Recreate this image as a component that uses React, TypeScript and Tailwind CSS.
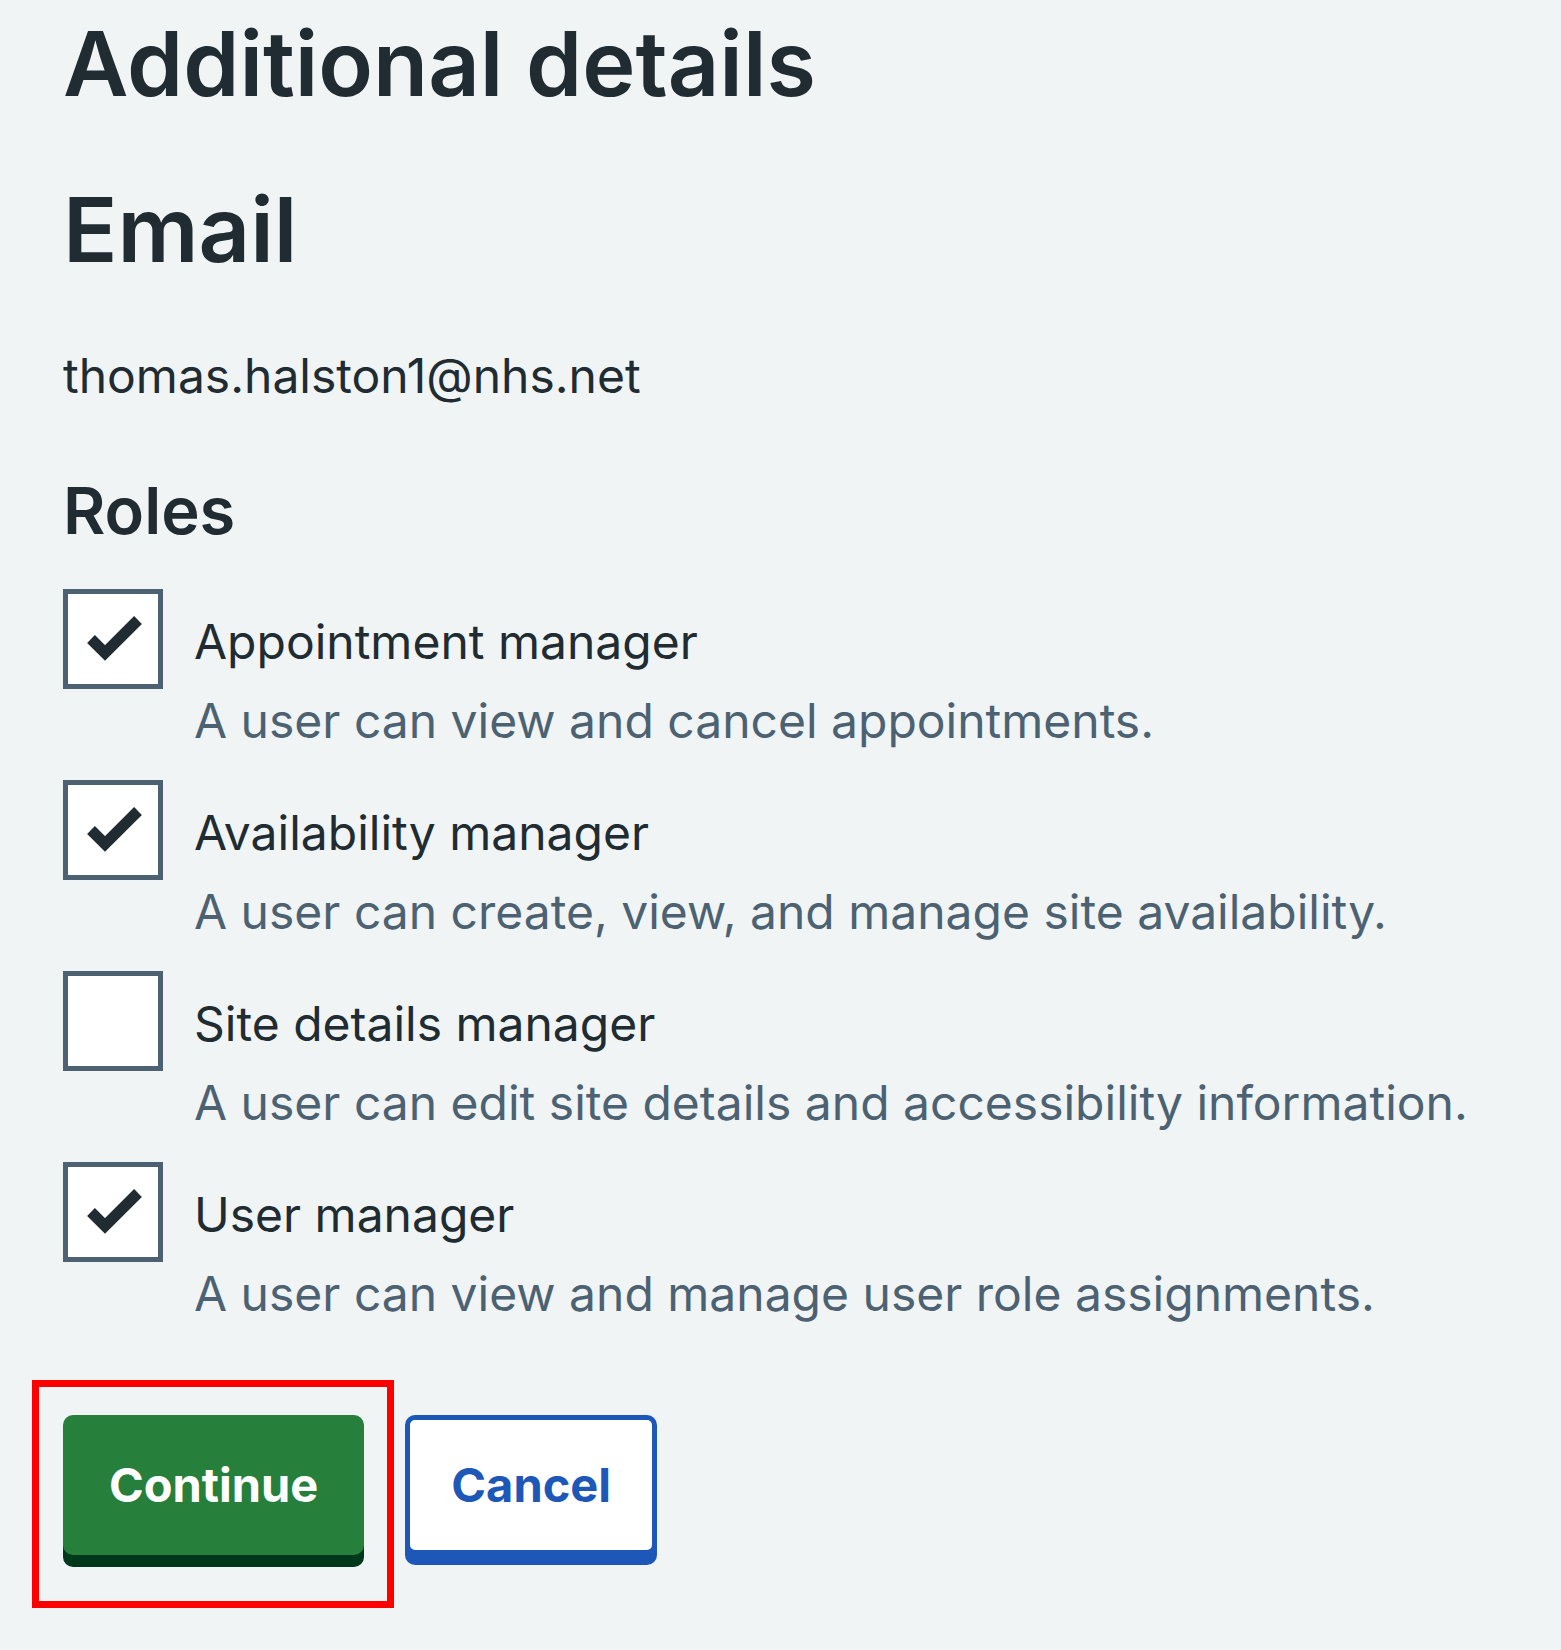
import React from "react";

type Role = {
  name: string;
  description: string;
  checked: boolean;
};

const roles: Role[] = [
  { name: "Appointment manager", description: "A user can view and cancel appointments.", checked: true },
  { name: "Availability manager", description: "A user can create, view, and manage site availability.", checked: true },
  { name: "Site details manager", description: "A user can edit site details and accessibility information.", checked: false },
  { name: "User manager", description: "A user can view and manage user role assignments.", checked: true },
];

function Checkbox({ checked }: { checked: boolean }) {
  return (
    <div className="flex h-[100px] w-[100px] shrink-0 items-center justify-center border-[5px] border-[#4c6272] bg-white">
      {checked ? (
        <svg width="90" height="90" viewBox="0 0 90 90" fill="none">
          <polyline points="23,45 37,59 70,26" stroke="#212b32" strokeWidth="11" strokeLinejoin="miter" />
        </svg>
      ) : null}
    </div>
  );
}

export default function App() {
  return (
    <main
      className="min-h-[1650px] bg-[#f0f4f5] pl-[63px] pt-[18px] text-[#212b32]"
      style={{ fontFamily: "Inter, 'Liberation Sans', sans-serif" }}
    >
      <h1 className="text-[90px] font-semibold leading-[92px]">Additional details</h1>
      <h2 className="mt-[74px] text-[90px] font-semibold leading-[92px]">Email</h2>
      <p className="mt-[64px] text-[48px] leading-[72px]">thomas.halston1@nhs.net</p>

      <h3 className="mt-[67px] text-[65px] font-semibold leading-[64px]">Roles</h3>

      <div className="mt-[46px] flex flex-col gap-[23px]">
        {roles.map((r) => (
          <div key={r.name} className="flex gap-[31px]">
            <Checkbox checked={r.checked} />
            <div className="pt-[17px]">
              <div className="text-[48px] leading-[72px]">{r.name}</div>
              <div className="mt-[7px] text-[48px] leading-[72px] text-[#4c6272]">{r.description}</div>
            </div>
          </div>
        ))}
      </div>

      <div className="mt-[85px] flex items-start">
        <div className="relative mr-[41px]">
          <button className="rounded-[10px] border-[5px] border-transparent bg-[#277f3c] px-[41px] py-[30px] text-[47px] font-bold leading-[70px] text-white shadow-[0_12px_0_#00381b]">
            Continue
          </button>
          <div className="pointer-events-none absolute -top-[35px] -right-[30px] -bottom-[53px] -left-[31px] border-[7px] border-[#ff0000]" />
        </div>
        <button className="rounded-[10px] border-[5px] border-[#1d58b8] bg-white px-[41px] py-[30px] text-[47px] font-bold leading-[70px] text-[#1d58b8] shadow-[0_10px_0_#1d58b8]">
          Cancel
        </button>
      </div>
    </main>
  );
}
